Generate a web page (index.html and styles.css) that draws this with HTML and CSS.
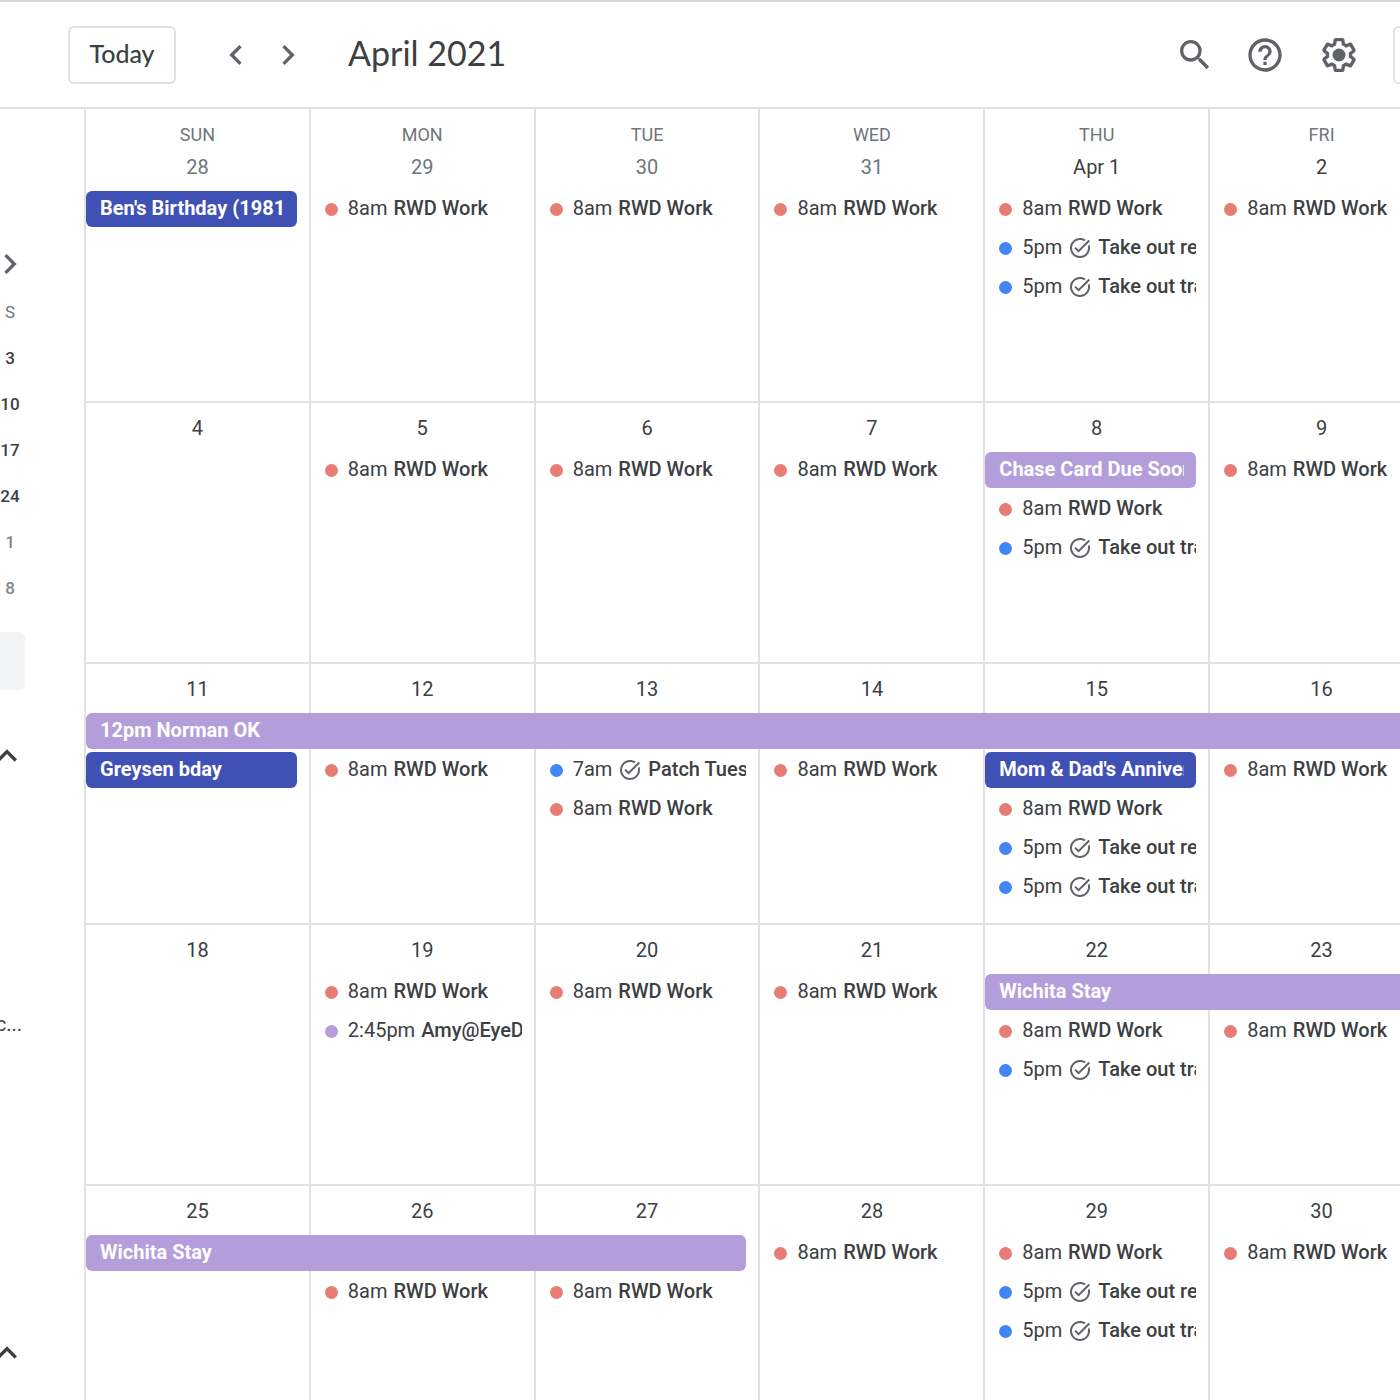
FILE: index.html
```html
<!DOCTYPE html>
<html lang="en">
<head>
  <meta charset="UTF-8" />
  <meta name="viewport" content="width=device-width, initial-scale=1" />
  <title>Calendar - April 2021</title>
  <link rel="stylesheet" href="styles.css">
</head>
<body>

<!-- Shared icons -->
<svg class="sprite" aria-hidden="true">
  <symbol id="left" viewBox="0 0 24 24"><path d="M15.41 7.41 14 6l-6 6 6 6 1.41-1.41L10.83 12z"/></symbol>
  <symbol id="right" viewBox="0 0 24 24"><path d="M10 6 8.59 7.41 13.17 12l-4.58 4.59L10 18l6-6z"/></symbol>
  <symbol id="up" viewBox="0 0 24 24"><path d="M12 8l-6 6 1.41 1.41L12 10.83l4.59 4.58L18 14z"/></symbol>
  <symbol id="task" viewBox="0 0 24 24"><path d="M22 5.18 10.59 16.6l-4.24-4.24 1.41-1.41 2.83 2.83 10-10L22 5.18zm-2.21 5.04c.13.57.21 1.17.21 1.78 0 4.42-3.58 8-8 8s-8-3.58-8-8 3.58-8 8-8c1.58 0 3.04.46 4.28 1.25l1.44-1.44C16.1 2.67 14.13 2 12 2 6.48 2 2 6.48 2 12s4.48 10 10 10 10-4.48 10-10c0-1.19-.22-2.33-.6-3.39l-1.61 1.61z"/></symbol>
</svg>

<header class="topbar">
  <button class="today">Today</button>
  <div class="pager">
    <button class="icon-btn" aria-label="Previous month"><svg><use href="#left"/></svg></button>
    <button class="icon-btn" aria-label="Next month"><svg><use href="#right"/></svg></button>
  </div>
  <h1>April 2021</h1>
  <div class="tools">
    <button class="icon-btn" aria-label="Search">
      <svg viewBox="0 0 24 24"><path d="M15.5 14h-.79l-.28-.27A6.47 6.47 0 0 0 16 9.5 6.5 6.5 0 1 0 9.5 16c1.61 0 3.09-.59 4.23-1.57l.27.28v.79l5 4.99L20.49 19l-4.99-5zm-6 0C7.01 14 5 11.99 5 9.5S7.01 5 9.5 5 14 7.01 14 9.5 11.99 14 9.5 14z"/></svg>
    </button>
    <button class="icon-btn" aria-label="Help">
      <svg viewBox="0 0 24 24"><path d="M11 18h2v-2h-2v2zm1-16C6.48 2 2 6.48 2 12s4.48 10 10 10 10-4.48 10-10S17.52 2 12 2zm0 18c-4.41 0-8-3.59-8-8s3.59-8 8-8 8 3.59 8 8-3.59 8-8 8zm0-14c-2.21 0-4 1.79-4 4h2c0-1.1.9-2 2-2s2 .9 2 2c0 2-3 1.75-3 5h2c0-2.25 3-2.5 3-5 0-2.21-1.79-4-4-4z"/></svg>
    </button>
    <button class="icon-btn settings" aria-label="Settings">
      <svg viewBox="0 0 24 24"><path d="M13.85 22.25h-3.7c-.74 0-1.36-.54-1.45-1.27l-.27-1.89c-.27-.14-.53-.29-.79-.46l-1.8.72c-.7.26-1.47-.03-1.81-.65L2.2 15.53c-.35-.66-.2-1.44.36-1.88l1.53-1.19c-.01-.15-.02-.3-.02-.46 0-.15.01-.31.02-.46l-1.52-1.19c-.59-.45-.74-1.26-.37-1.88l1.85-3.19c.34-.62 1.11-.9 1.79-.63l1.81.73c.26-.17.52-.32.78-.46l.27-1.91c.09-.7.71-1.25 1.44-1.25h3.7c.74 0 1.36.54 1.45 1.27l.27 1.89c.27.14.53.29.79.46l1.8-.72c.71-.26 1.48.03 1.82.65l1.84 3.18c.36.66.2 1.44-.36 1.88l-1.52 1.19c.01.15.02.3.02.46s-.01.31-.02.46l1.52 1.19c.56.45.72 1.23.37 1.86l-1.86 3.22c-.34.62-1.11.9-1.8.63l-1.8-.72c-.26.17-.52.32-.78.46l-.27 1.91c-.1.68-.72 1.22-1.46 1.22zm-3.23-2h2.76l.37-2.55.53-.22c.44-.18.88-.44 1.34-.78l.45-.34 2.38.96 1.38-2.4-2.03-1.58.07-.56c.03-.26.06-.51.06-.78s-.03-.53-.06-.78l-.07-.56 2.03-1.58-1.39-2.4-2.39.96-.45-.35c-.42-.32-.87-.58-1.33-.77l-.52-.22-.37-2.55h-2.76l-.37 2.55-.53.21c-.44.19-.88.44-1.34.79l-.45.33-2.38-.95-1.39 2.39 2.03 1.58-.07.56a7 7 0 0 0-.06.79c0 .26.02.53.06.78l.07.56-2.03 1.58 1.38 2.4 2.39-.96.45.35c.43.33.86.58 1.33.77l.53.22.38 2.55z"/><circle cx="12" cy="12" r="3.9"/></svg>
    </button>
    <button class="view-btn" aria-label="Month view"></button>
  </div>
</header>

<div class="layout">
  <aside class="sidebar">
    <button class="side-btn" aria-label="Next"><svg><use href="#right"/></svg></button>
    <table class="mini">
      <thead><tr><th>S</th></tr></thead>
      <tbody>
        <tr><td>3</td></tr>
        <tr><td>10</td></tr>
        <tr><td>17</td></tr>
        <tr><td>24</td></tr>
        <tr><td class="other">1</td></tr>
        <tr><td class="other">8</td></tr>
      </tbody>
    </table>
    <input class="people" type="text" aria-label="Search for people" />
    <button class="side-btn fold" aria-label="My calendars"><svg><use href="#up"/></svg></button>
    <p class="cal-name">c...</p>
    <button class="side-btn fold" aria-label="Other calendars"><svg><use href="#up"/></svg></button>
  </aside>

  <main class="main">
    <table class="month">
      <thead>
        <tr><th>SUN</th><th>MON</th><th>TUE</th><th>WED</th><th>THU</th><th>FRI</th></tr>
      </thead>
      <tbody>
        <tr>
          <td>
            <p class="date other">28</p>
            <ul>
              <li class="bar blue"><span>Ben's Birthday (1981)</span></li>
            </ul>
          </td>
          <td>
            <p class="date other">29</p>
            <ul>
              <li class="event"><i class="dot"></i><time>8am</time><b>RWD Work</b></li>
            </ul>
          </td>
          <td>
            <p class="date other">30</p>
            <ul>
              <li class="event"><i class="dot"></i><time>8am</time><b>RWD Work</b></li>
            </ul>
          </td>
          <td>
            <p class="date other">31</p>
            <ul>
              <li class="event"><i class="dot"></i><time>8am</time><b>RWD Work</b></li>
            </ul>
          </td>
          <td>
            <p class="date">Apr 1</p>
            <ul>
              <li class="event"><i class="dot"></i><time>8am</time><b>RWD Work</b></li>
              <li class="event"><i class="dot task"></i><time>5pm</time><svg><use href="#task"/></svg><b>Take out recycling</b></li>
              <li class="event"><i class="dot task"></i><time>5pm</time><svg><use href="#task"/></svg><b>Take out trash</b></li>
            </ul>
          </td>
          <td>
            <p class="date">2</p>
            <ul>
              <li class="event"><i class="dot"></i><time>8am</time><b>RWD Work</b></li>
            </ul>
          </td>
        </tr>

        <tr>
          <td>
            <p class="date">4</p>
          </td>
          <td>
            <p class="date">5</p>
            <ul>
              <li class="event"><i class="dot"></i><time>8am</time><b>RWD Work</b></li>
            </ul>
          </td>
          <td>
            <p class="date">6</p>
            <ul>
              <li class="event"><i class="dot"></i><time>8am</time><b>RWD Work</b></li>
            </ul>
          </td>
          <td>
            <p class="date">7</p>
            <ul>
              <li class="event"><i class="dot"></i><time>8am</time><b>RWD Work</b></li>
            </ul>
          </td>
          <td>
            <p class="date">8</p>
            <ul>
              <li class="bar purple"><span>Chase Card Due Soon</span></li>
              <li class="event"><i class="dot"></i><time>8am</time><b>RWD Work</b></li>
              <li class="event"><i class="dot task"></i><time>5pm</time><svg><use href="#task"/></svg><b>Take out trash</b></li>
            </ul>
          </td>
          <td>
            <p class="date">9</p>
            <ul>
              <li class="event"><i class="dot"></i><time>8am</time><b>RWD Work</b></li>
            </ul>
          </td>
        </tr>

        <tr>
          <td>
            <p class="date">11</p>
            <ul>
              <li class="bar purple span-6"><span>12pm Norman OK</span></li>
              <li class="bar blue"><span>Greysen bday</span></li>
            </ul>
          </td>
          <td>
            <p class="date">12</p>
            <ul>
              <li class="slot"></li>
              <li class="event"><i class="dot"></i><time>8am</time><b>RWD Work</b></li>
            </ul>
          </td>
          <td>
            <p class="date">13</p>
            <ul>
              <li class="slot"></li>
              <li class="event"><i class="dot task"></i><time>7am</time><svg><use href="#task"/></svg><b>Patch Tuesday</b></li>
              <li class="event"><i class="dot"></i><time>8am</time><b>RWD Work</b></li>
            </ul>
          </td>
          <td>
            <p class="date">14</p>
            <ul>
              <li class="slot"></li>
              <li class="event"><i class="dot"></i><time>8am</time><b>RWD Work</b></li>
            </ul>
          </td>
          <td>
            <p class="date">15</p>
            <ul>
              <li class="slot"></li>
              <li class="bar blue"><span>Mom &amp; Dad's Anniversary</span></li>
              <li class="event"><i class="dot"></i><time>8am</time><b>RWD Work</b></li>
              <li class="event"><i class="dot task"></i><time>5pm</time><svg><use href="#task"/></svg><b>Take out recycling</b></li>
              <li class="event"><i class="dot task"></i><time>5pm</time><svg><use href="#task"/></svg><b>Take out trash</b></li>
            </ul>
          </td>
          <td>
            <p class="date">16</p>
            <ul>
              <li class="slot"></li>
              <li class="event"><i class="dot"></i><time>8am</time><b>RWD Work</b></li>
            </ul>
          </td>
        </tr>

        <tr>
          <td>
            <p class="date">18</p>
          </td>
          <td>
            <p class="date">19</p>
            <ul>
              <li class="event"><i class="dot"></i><time>8am</time><b>RWD Work</b></li>
              <li class="event"><i class="dot family"></i><time>2:45pm</time><b>Amy@EyeDr</b></li>
            </ul>
          </td>
          <td>
            <p class="date">20</p>
            <ul>
              <li class="event"><i class="dot"></i><time>8am</time><b>RWD Work</b></li>
            </ul>
          </td>
          <td>
            <p class="date">21</p>
            <ul>
              <li class="event"><i class="dot"></i><time>8am</time><b>RWD Work</b></li>
            </ul>
          </td>
          <td>
            <p class="date">22</p>
            <ul>
              <li class="bar purple span-2"><span>Wichita Stay</span></li>
              <li class="event"><i class="dot"></i><time>8am</time><b>RWD Work</b></li>
              <li class="event"><i class="dot task"></i><time>5pm</time><svg><use href="#task"/></svg><b>Take out trash</b></li>
            </ul>
          </td>
          <td>
            <p class="date">23</p>
            <ul>
              <li class="slot"></li>
              <li class="event"><i class="dot"></i><time>8am</time><b>RWD Work</b></li>
            </ul>
          </td>
        </tr>

        <tr>
          <td>
            <p class="date">25</p>
            <ul>
              <li class="bar purple span-3"><span>Wichita Stay</span></li>
            </ul>
          </td>
          <td>
            <p class="date">26</p>
            <ul>
              <li class="slot"></li>
              <li class="event"><i class="dot"></i><time>8am</time><b>RWD Work</b></li>
            </ul>
          </td>
          <td>
            <p class="date">27</p>
            <ul>
              <li class="slot"></li>
              <li class="event"><i class="dot"></i><time>8am</time><b>RWD Work</b></li>
            </ul>
          </td>
          <td>
            <p class="date">28</p>
            <ul>
              <li class="event"><i class="dot"></i><time>8am</time><b>RWD Work</b></li>
            </ul>
          </td>
          <td>
            <p class="date">29</p>
            <ul>
              <li class="event"><i class="dot"></i><time>8am</time><b>RWD Work</b></li>
              <li class="event"><i class="dot task"></i><time>5pm</time><svg><use href="#task"/></svg><b>Take out recycling</b></li>
              <li class="event"><i class="dot task"></i><time>5pm</time><svg><use href="#task"/></svg><b>Take out trash</b></li>
            </ul>
          </td>
          <td>
            <p class="date">30</p>
            <ul>
              <li class="event"><i class="dot"></i><time>8am</time><b>RWD Work</b></li>
            </ul>
          </td>
        </tr>
      </tbody>
    </table>
  </main>
</div>

</body>
</html>
```
FILE: styles.css
```css
* {
  box-sizing: border-box;
}

body {
  margin: 0;
  height: 100vh;
  overflow: hidden;
  background: white;
  color: #3c4043;
  font-family: Roboto, Arial, sans-serif;
  font-size: 20px;
}

h1, p, ul {
  margin: 0;
  padding: 0;
}

button {
  padding: 0;
  border: none;
  background: none;
  font-family: inherit;
  cursor: pointer;
}

svg {
  fill: #5f6368;
}

.sprite {
  display: none;
}

/* top bar */
.topbar {
  display: flex;
  align-items: center;
  height: 109px;
  padding-left: 68px;
  border-top: 2px solid #dadada;
  border-bottom: 2px solid #e0e1e3;
  overflow: hidden;
}

.today {
  width: 108px;
  height: 58px;
  padding-bottom: 4px;
  border: 2px solid #e0e1e3;
  border-radius: 6px;
  color: #3c4043;
  font-family: Lato, sans-serif;
  font-size: 25px;
  font-weight: 500;
}

.pager {
  display: flex;
  gap: 12px;
  margin: 0 40px;
}

.icon-btn,
.icon-btn svg {
  display: block;
  width: 40px;
  height: 40px;
}

.topbar h1 {
  padding-bottom: 4px;
  font-family: Lato, sans-serif;
  font-size: 34px;
  font-weight: 400;
}

.tools {
  display: flex;
  align-items: center;
  gap: 30px;
  margin-left: auto;
  margin-right: -101px;
}

.settings {
  margin: 0 4px;
}

.view-btn {
  width: 108px;
  height: 58px;
  border: 2px solid #e0e1e3;
  border-radius: 6px;
}

.layout {
  display: flex;
}

/* sidebar, scrolled so only its right edge shows */
.sidebar {
  flex: 0 0 84px;
  padding-top: 135px;
  overflow: hidden;
}

.side-btn,
.side-btn svg {
  display: block;
  width: 40px;
  height: 40px;
}

.side-btn {
  margin-left: -10px;
}

.mini {
  width: 20px;
  border-collapse: collapse;
  margin-top: 5px;
}

.mini th,
.mini td {
  height: 46px;
  padding: 0;
  text-align: center;
  font-size: 17px;
  font-weight: 500;
}

.mini th {
  color: #70757a;
  font-weight: 400;
}

.mini .other {
  color: #80868b;
}

.people {
  display: block;
  width: 25px;
  height: 58px;
  margin: 21px 0 46px;
  border: none;
  border-radius: 0 6px 6px 0;
  background: #f1f3f4;
}

.fold {
  margin-left: -13px;
}

.fold svg {
  fill: #3c4043;
}

.cal-name {
  display: flex;
  justify-content: flex-end;
  width: 22px;
  height: 30px;
  margin: 233px 0 294px;
  line-height: 30px;
  overflow: hidden;
}

/* month grid */
.main {
  flex: 1;
  min-width: 0;
}

.month {
  width: calc(100% + 33px);
  table-layout: fixed;
  border-collapse: separate;
  border-spacing: 0;
}

.month th {
  padding: 19px 0 0;
  border-left: 2px solid #e0e1e3;
  color: #70757a;
  font-size: 18px;
  font-weight: 400;
  line-height: 14px;
}

.month td {
  height: 261px;
  padding: 0;
  border-left: 2px solid #e0e1e3;
  border-bottom: 2px solid #e0e1e3;
  vertical-align: top;
}

.month ul {
  display: flex;
  flex-direction: column;
  gap: 3px;
  list-style: none;
}

.date {
  padding: 10px 0 9px;
  line-height: 30px;
  text-align: center;
}

.date.other {
  color: #70757a;
}

.bar,
.event,
.slot {
  height: 36px;
  margin-right: 12px;
  line-height: 34px;
  white-space: nowrap;
}

.bar {
  position: relative;
  padding: 0 12px 0 14px;
  border-radius: 6px;
  color: white;
  font-weight: 700;
}

.bar span {
  display: block;
  overflow: hidden;
}

.blue {
  background: #3f51b5;
}

.purple {
  background: #b39ddb;
}

.span-2 {
  width: calc(200% - 10px);
}

.span-3 {
  width: calc(300% - 8px);
}

.span-6 {
  width: calc(600% - 2px);
}

.event {
  display: flex;
  align-items: center;
  gap: 6px;
  padding-left: 14px;
  overflow: hidden;
}

.event time,
.event b {
  height: 36px;
}

.event b {
  font-weight: 500;
}

.event svg {
  flex: none;
  width: 24px;
  height: 24px;
}

.dot {
  flex: none;
  width: 13px;
  height: 13px;
  margin-right: 4px;
  border-radius: 50%;
  background: #e67c73;
}

.dot.task {
  background: #4285f4;
}

.dot.family {
  background: #b39ddb;
}
```
